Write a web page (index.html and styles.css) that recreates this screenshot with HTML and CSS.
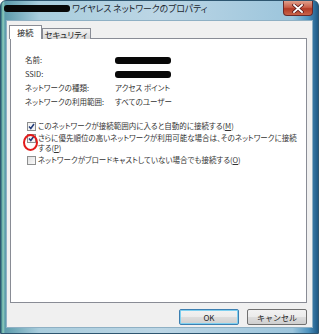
FILE: index.html
```html
<!DOCTYPE html>
<html lang="ja">
<head>
    <meta charset="UTF-8">
    <title>ワイヤレス ネットワークのプロパティ</title>
    <link rel="stylesheet" href="styles.css">
</head>
<body>

    <div class="window">
        <div class="titlebar">
            <span class="redact redact-title"></span>
            <span class="title">ワイヤレス ネットワークのプロパティ</span>
            <span class="close">
                <svg width="12" height="9" viewBox="0 0 12 9">
                    <path d="M2 1 L10 8 M10 1 L2 8" stroke="#5a1a1a" stroke-width="3.4" stroke-linecap="square"/>
                    <path d="M2 1 L10 8 M10 1 L2 8" stroke="#fff" stroke-width="1.8" stroke-linecap="square"/>
                </svg>
            </span>
        </div>

        <div class="client">
            <div class="tabs">
                <div class="tab active">接続</div>
                <div class="tab">セキュリティ</div>
            </div>

            <div class="panel">
                <div class="info">
                    <span>名前:</span><span><i class="redact redact-value"></i></span>
                    <span>SSID:</span><span><i class="redact redact-value"></i></span>
                    <span>ネットワークの種類:</span><span>アクセス ポイント</span>
                    <span>ネットワークの利用範囲:</span><span>すべてのユーザー</span>
                </div>

                <div class="options">
                    <label class="option">
                        <span class="check checked"></span>
                        <span>このネットワークが接続範囲内に入ると自動的に接続する(<u>M</u>)</span>
                    </label>
                    <label class="option">
                        <span class="check checked"></span>
                        <span>さらに優先順位の高いネットワークが利用可能な場合は、そのネットワークに接続<span class="nowrap">する(<u>P</u>)</span></span>
                    </label>
                    <label class="option">
                        <span class="check"></span>
                        <span>ネットワークがブロードキャストしていない場合でも接続する(<u>O</u>)</span>
                    </label>
                </div>

                <span class="annotation"></span>
            </div>

            <div class="buttons">
                <button class="btn default">OK</button>
                <button class="btn">キャンセル</button>
            </div>
        </div>
    </div>

</body>
</html>
```

FILE: styles.css
```css
body {
    margin: 0;
    width: 319px;
    height: 334px;
    overflow: hidden;
    font-family: "Noto Sans CJK JP", "Noto Sans", sans-serif;
    font-feature-settings: "palt";
    font-size: 7.5px;
    color: #333;
}

.window {
    box-sizing: border-box;
    height: 334px;
    display: flex;
    flex-direction: column;
    padding: 0 5px 5px;
    border: 1px solid #2e5670;
    border-radius: 6px 6px 0 0;
    background: linear-gradient(90deg, #2f6f80 0, #8fd0bc 2px, #5d9cac 4px, #a9cddd 12%, #bcd6e5 50%, #9cc5dc 92%, #4d93bf 97%, #1f5a86 100%);
}

/* title bar */
.titlebar {
    height: 19px;
    display: flex;
    align-items: flex-start;
}

.redact {
    display: inline-block;
    background: #080808;
    border-radius: 3px;
}

.redact-title {
    width: 66px;
    height: 7px;
    margin: 4px 2px 0 -2px;
}

.title {
    line-height: 15px;
    font-size: 8.8px;
    color: #1b2730;
}

.close {
    margin-left: auto;
    width: 30px;
    height: 15px;
    display: flex;
    align-items: center;
    justify-content: center;
    box-sizing: border-box;
    border: 1px solid #6b2a2a;
    border-top: none;
    border-radius: 0 0 4px 4px;
    background: linear-gradient(#e0a08c, #c9604a 45%, #b23a25 55%, #c8644a);
}

/* client area */
.client {
    flex: 1;
    display: flex;
    flex-direction: column;
    padding: 4px 5px 2px 3px;
    background: #f0f0f0;
    border: 1px solid #8fb0c4;
}

.tabs {
    display: flex;
    align-items: flex-end;
    position: relative;
    z-index: 1;
}

.tab {
    height: 10px;
    line-height: 10px;
    padding: 0 2px;
    margin-bottom: -1px;
    border: 1px solid #898c95;
    border-bottom: none;
    background: linear-gradient(#f3f3f3, #d8d8d8);
    font-size: 8.3px;
    color: #222;
}

.tab.active {
    height: 13px;
    line-height: 13px;
    margin-left: -1px;
    padding: 0 7px;
    background: #fff;
}

.panel {
    flex: 1;
    position: relative;
    padding: 14px 0 0 14px;
    background: #fff;
    border: 1px solid #898c95;
}

.info {
    display: grid;
    grid-template-columns: 90px 1fr;
    line-height: 14px;
}

.redact-value {
    width: 56px;
    height: 7px;
    vertical-align: middle;
}

.options {
    display: flex;
    flex-direction: column;
    gap: 2px;
    margin-top: 12px;
    line-height: 10px;
}

.option {
    display: flex;
    align-items: flex-start;
    gap: 2px;
    padding-left: 2px;
}

.nowrap {
    white-space: nowrap;
}

.check {
    flex: none;
    box-sizing: border-box;
    width: 9px;
    height: 9px;
    margin-top: 1px;
    border: 1px solid #8e8f8f;
    background: linear-gradient(135deg, #e0e0e0, #fafafa);
}

.check.checked {
    background: #f4f4f4 url("data:image/svg+xml;utf8,<svg xmlns='http://www.w3.org/2000/svg' width='7' height='7'><path d='M1 3.5 L2.8 5.5 L6 1' fill='none' stroke='%23223c7a' stroke-width='1.5'/></svg>") no-repeat center;
}

.annotation {
    position: absolute;
    left: 12px;
    top: 95px;
    width: 11px;
    height: 13px;
    border: 2px solid #e31b1b;
    border-radius: 50%;
}

.buttons {
    display: flex;
    justify-content: flex-end;
    gap: 8px;
    padding: 6px 0 0;
}

.btn {
    width: 60px;
    height: 16px;
    padding: 0;
    font-family: inherit;
    font-size: 8px;
    color: #222;
    border: 1px solid #707070;
    border-radius: 2px;
    background: linear-gradient(#f2f2f2, #ebebeb 50%, #dddddd 50%, #cfcfcf);
}

.btn.default {
    border-color: #3c7fb1;
    box-shadow: inset 0 0 0 1px #7fd0f0;
}
```
